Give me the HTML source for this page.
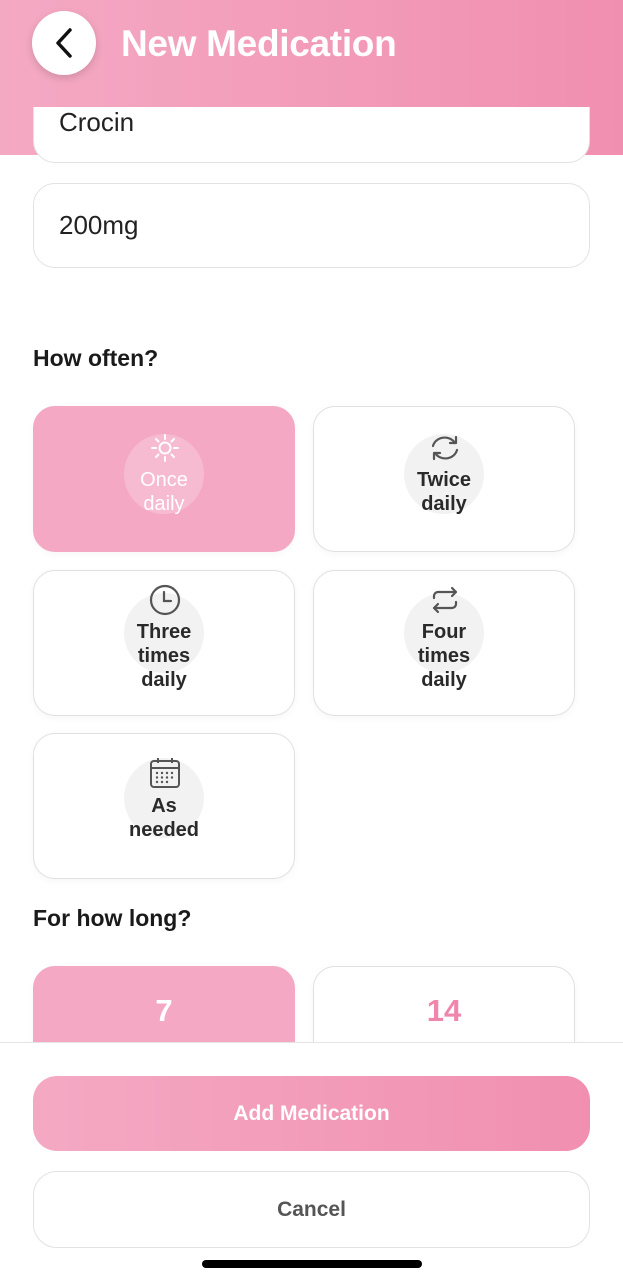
<!DOCTYPE html>
<html><head><style>
*{box-sizing:border-box;margin:0;padding:0}
body{width:623px;height:1280px;position:relative;overflow:hidden;background:#fff;font-family:"Liberation Sans",sans-serif}
.hbg{position:absolute;left:0;top:0;width:623px;height:155px;background:linear-gradient(90deg,#f4a9c3,#f18fb0)}
.htop{position:absolute;left:0;top:0;width:623px;height:107px;background:linear-gradient(90deg,#f4a9c3,#f18fb0);z-index:5}
.back{position:absolute;left:32px;top:11px;width:64px;height:64px;border-radius:50%;background:#fff;box-shadow:0 3px 8px rgba(0,0,0,.15)}
.title{position:absolute;left:121px;top:23px;font-size:37px;font-weight:bold;color:#fff;letter-spacing:-.3px}
.inp{position:absolute;left:33px;width:557px;background:#fff;border:1.5px solid #e2e2e2;border-radius:22px;font-size:26px;color:#222;padding-left:25px}
.h{position:absolute;left:33px;font-size:23px;font-weight:bold;color:#1a1a1a}
.card{position:absolute;width:262px;height:146px;border:1.5px solid #e0e0e0;border-radius:22px;background:#fff;box-shadow:0 2px 8px rgba(0,0,0,.04)}
.card.sel{background:#f4a8c3;border-color:#f4a8c3}
.circ{position:absolute;left:90px;width:80px;height:80px;border-radius:50%;background:#f2f2f2}
.sel .circ{background:rgba(255,255,255,.22)}
.lbl{position:absolute;left:0;width:100%;text-align:center;font-size:20px;font-weight:bold;color:#2a2a2a;line-height:24px}
.sel .lbl{color:#fff}
.ic{position:absolute;left:114px;width:34px;height:34px}
.foot{position:absolute;left:0;top:1042px;width:623px;height:238px;background:#fff;border-top:1.5px solid #e4e4e4}
.btn{position:absolute;left:33px;width:557px;border-radius:24px;text-align:center;font-size:21px;font-weight:bold}
</style></head><body>
<div class="hbg"></div>
<div class="htop">
<div class="back"><svg width="64" height="64" viewBox="0 0 64 64"><path d="M38 19 L26 32 L38 45" fill="none" stroke="#111" stroke-width="3.5" stroke-linecap="round" stroke-linejoin="round"/></svg></div>
<div class="title">New Medication</div>
</div>
<div class="inp" style="top:70px;height:93px;padding-top:36px">Crocin</div>
<div class="inp" style="top:183px;height:85px;line-height:82px">200mg</div>
<div class="h" style="top:345px">How often?</div>

<div class="card sel" style="left:33px;top:406px">
<div class="circ" style="top:27px"></div>
<svg class="ic" style="top:24px" viewBox="0 0 34 34" fill="none" stroke="#fff" stroke-width="2" stroke-linecap="round"><circle cx="17" cy="17" r="5.5"/><path d="M17 4v4M17 26v4M4 17h4M26 17h4M8 8l2.5 2.5M23.5 23.5L26 26M8 26l2.5-2.5M23.5 10.5L26 8"/></svg>
<div class="lbl" style="top:61px;font-weight:normal">Once<br>daily</div>
</div>
<div class="card" style="left:313px;top:406px">
<div class="circ" style="top:27px"></div>
<svg class="ic" style="top:24px" viewBox="0 0 34 34" fill="none" stroke="#555" stroke-width="2.2" stroke-linecap="round" stroke-linejoin="round"><path d="M5 15a12 11 0 0 1 22-3M29 19a12 11 0 0 1-22 3"/><path d="M28 6v6h-6M6 28v-6h6"/></svg>
<div class="lbl" style="top:61px">Twice<br>daily</div>
</div>
<div class="card" style="left:33px;top:570px">
<div class="circ" style="top:22px"></div>
<svg class="ic" style="top:12px" viewBox="0 0 34 34" fill="none" stroke="#555" stroke-width="2.2" stroke-linecap="round"><circle cx="17" cy="17" r="14"/><path d="M16 9v9h7"/></svg>
<div class="lbl" style="top:49px">Three<br>times<br>daily</div>
</div>
<div class="card" style="left:313px;top:570px">
<div class="circ" style="top:22px"></div>
<svg class="ic" style="top:12px" viewBox="0 0 34 34" fill="none" stroke="#555" stroke-width="2.2" stroke-linecap="round" stroke-linejoin="round"><path d="M6 15v-2a4 4 0 0 1 4-4h18M24 5l4 4-4 4M28 19v2a4 4 0 0 1-4 4H6M10 29l-4-4 4-4"/></svg>
<div class="lbl" style="top:49px">Four<br>times<br>daily</div>
</div>
<div class="card" style="left:33px;top:733px">
<div class="circ" style="top:24px"></div>
<svg class="ic" style="top:22px" viewBox="0 0 34 34" fill="none" stroke="#555" stroke-width="2"><rect x="3" y="5" width="28" height="26" rx="3"/><path d="M3 12h28M10 2v5M24 2v5"/><g fill="#555" stroke="none"><circle cx="9" cy="17" r="1.2"/><circle cx="14" cy="17" r="1.2"/><circle cx="19" cy="17" r="1.2"/><circle cx="24" cy="17" r="1.2"/><circle cx="9" cy="21.5" r="1.2"/><circle cx="14" cy="21.5" r="1.2"/><circle cx="19" cy="21.5" r="1.2"/><circle cx="24" cy="21.5" r="1.2"/><circle cx="9" cy="26" r="1.2"/><circle cx="14" cy="26" r="1.2"/><circle cx="19" cy="26" r="1.2"/></g></svg>
<div class="lbl" style="top:60px">As<br>needed</div>
</div>

<div class="h" style="top:905px">For how long?</div>
<div class="card sel" style="left:33px;top:966px"><div class="lbl" style="top:26px;font-size:31px;line-height:36px">7</div></div>
<div class="card" style="left:313px;top:966px"><div class="lbl" style="top:26px;font-size:31px;line-height:36px;color:#ef86ab">14</div></div>

<div class="foot">
<div class="btn" style="top:33px;height:75px;line-height:75px;color:#fff;background:linear-gradient(90deg,#f4a9c3,#f18fb0)">Add Medication</div>
<div class="btn" style="top:128px;height:77px;line-height:75px;color:#555;background:#fff;border:1.5px solid #e2e2e2">Cancel</div>
<div style="position:absolute;left:202px;top:217px;width:220px;height:8px;border-radius:4px;background:#000"></div>
</div>
</body></html>
